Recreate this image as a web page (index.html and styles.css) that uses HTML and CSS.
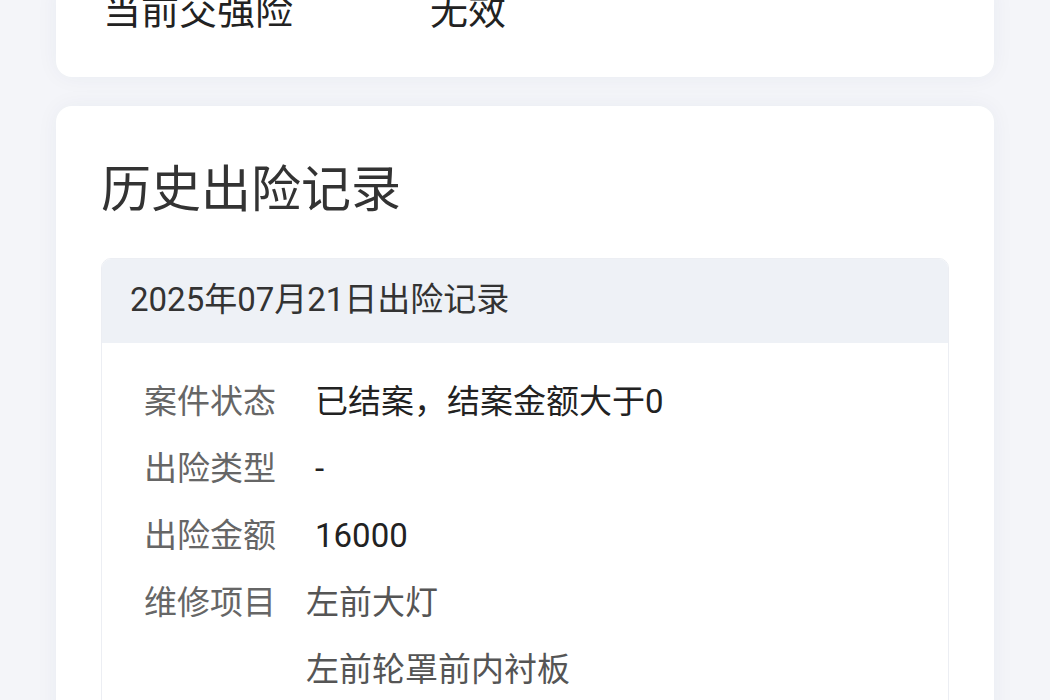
FILE: index.html
```html
<!DOCTYPE html>
<html lang="zh-CN">
<head>
<meta charset="UTF-8">
<title>出险记录</title>
<link rel="stylesheet" href="styles.css">
</head>
<body>
<div class="page">
  <div class="card card-top">
    <div class="info-row">
      <span class="info-label">当前交强险</span>
      <span class="info-value">无效</span>
    </div>
  </div>

  <div class="card card-history">
    <h2 class="card-title">历史出险记录</h2>
    <div class="record">
      <div class="record-head">2025年07月21日出险记录</div>
      <div class="record-body">
        <div class="record-row">
          <span class="label">案件状态</span>
          <span class="value strong">已结案，结案金额大于0</span>
        </div>
        <div class="record-row">
          <span class="label">出险类型</span>
          <span class="value strong">-</span>
        </div>
        <div class="record-row">
          <span class="label">出险金额</span>
          <span class="value strong">16000</span>
        </div>
        <div class="record-row">
          <span class="label">维修项目</span>
          <div class="value items">
            <div>左前大灯</div>
            <div>左前轮罩前内衬板</div>
          </div>
        </div>
      </div>
    </div>
  </div>
</div>
</body>
</html>
```

FILE: styles.css
```css
body {
margin: 0;
background: #f4f5f9;
font-family: Roboto, "Noto Sans CJK SC", sans-serif;
color: #333;
overflow: hidden;
}

.page {
padding: 0 56px;
margin-top: -13px;
}

.card {
background: #fff;
border-radius: 16px;
box-shadow: 0 0 22px rgba(40, 50, 90, 0.05);
}

.card-top {
border-radius: 0 0 16px 16px;
padding: 0 46px 41px 47px;
margin-bottom: 29px;
}

.info-row {
display: flex;
font-size: 38px;
line-height: 49px;
color: #222;
}

.info-label {
width: 327px;
}

.card-history {
padding: 54px 45px 40px 45px;
}

.card-title {
margin: 0 0 38px 0;
font-size: 50px;
line-height: 60px;
font-weight: normal;
color: #333;
}

.record {
border: 1px solid #eceef3;
border-radius: 10px;
overflow: hidden;
}

.record-head {
background: #eef1f6;
height: 84px;
line-height: 82px;
padding-left: 28px;
font-size: 33px;
color: #333;
}

.record-body {
padding: 25px 0 20px 42px;
font-size: 33px;
line-height: 67px;
}

.record-row {
display: flex;
}

.label {
width: 132px;
color: #666;
flex-shrink: 0;
}

.value {
margin-left: 30px;
}

.value.strong {
color: #222;
padding-left: 9px;
}

.value.items {
color: #555;
}
```
